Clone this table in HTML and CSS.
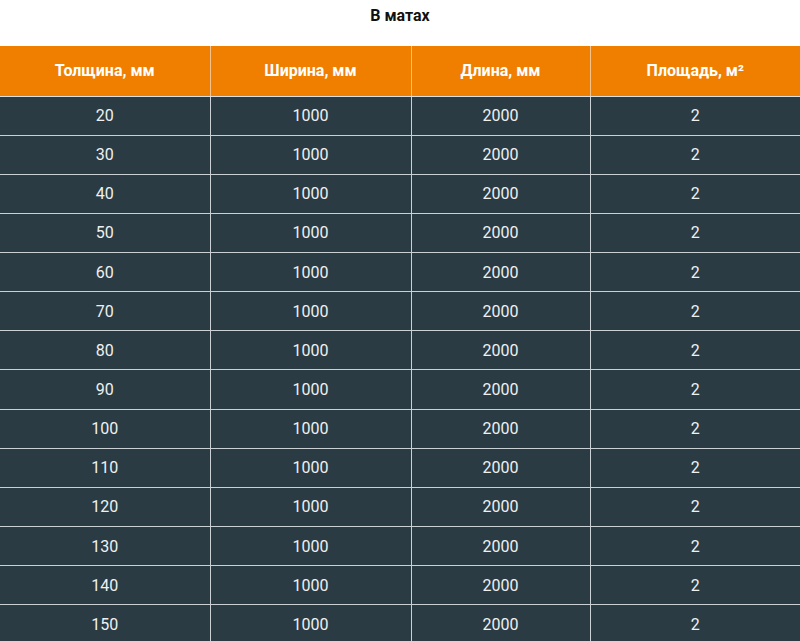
FILE: index.html
```html
<!DOCTYPE html>
<html lang="ru">
<head>
<meta charset="utf-8">
<title>В матах</title>
<link rel="stylesheet" href="styles.css">
</head>
<body>
<div class="title">В матах</div>
<table class="spec">
<colgroup>
<col class="c1"><col class="c2"><col class="c3"><col class="c4">
</colgroup>
<thead>
<tr><th>Толщина, мм</th><th>Ширина, мм</th><th>Длина, мм</th><th>Площадь, м²</th></tr>
</thead>
<tbody>
<tr><td>20</td><td>1000</td><td>2000</td><td>2</td></tr>
<tr><td>30</td><td>1000</td><td>2000</td><td>2</td></tr>
<tr><td>40</td><td>1000</td><td>2000</td><td>2</td></tr>
<tr><td>50</td><td>1000</td><td>2000</td><td>2</td></tr>
<tr><td>60</td><td>1000</td><td>2000</td><td>2</td></tr>
<tr><td>70</td><td>1000</td><td>2000</td><td>2</td></tr>
<tr><td>80</td><td>1000</td><td>2000</td><td>2</td></tr>
<tr><td>90</td><td>1000</td><td>2000</td><td>2</td></tr>
<tr><td>100</td><td>1000</td><td>2000</td><td>2</td></tr>
<tr><td>110</td><td>1000</td><td>2000</td><td>2</td></tr>
<tr><td>120</td><td>1000</td><td>2000</td><td>2</td></tr>
<tr><td>130</td><td>1000</td><td>2000</td><td>2</td></tr>
<tr><td>140</td><td>1000</td><td>2000</td><td>2</td></tr>
<tr><td>150</td><td>1000</td><td>2000</td><td>2</td></tr>
</tbody>
</table>
</body>
</html>
```

FILE: styles.css
```css
html, body {
  margin: 0;
  padding: 0;
  background: #ffffff;
  overflow: hidden;
}
body {
  font-family: Roboto, "Liberation Sans", Arial, sans-serif;
}
.title {
  height: 46px;
  box-sizing: border-box;
  padding-top: 6px;
  font-size: 16px;
  line-height: 20px;
  font-weight: 700;
  color: #111111;
  text-align: center;
}
.spec {
  width: 800px;
  border-collapse: collapse;
  table-layout: fixed;
}
.c1 { width: 210px; }
.c2 { width: 201px; }
.c3 { width: 179px; }
.c4 { width: 210px; }
.spec th {
  height: 50px;
  box-sizing: border-box;
  padding: 0;
  background: #f07f00;
  color: #ffffff;
  font-size: 16px;
  font-weight: 700;
  text-align: center;
  vertical-align: middle;
  border-left: 1px solid #f6c28a;
  border-right: 1px solid #f6c28a;
  border-bottom: 1px solid #d9dfe2;
}
.spec th:first-child { border-left: none; }
.spec th:last-child { border-right: none; }
.spec td {
  height: 39.15px;
  box-sizing: border-box;
  padding: 0;
  background: #2b3b43;
  color: #eef1f2;
  font-size: 16px;
  text-align: center;
  vertical-align: middle;
  border: 1px solid #c9d1d5;
}
.spec td:first-child { border-left: none; }
.spec td:last-child { border-right: none; }
```
